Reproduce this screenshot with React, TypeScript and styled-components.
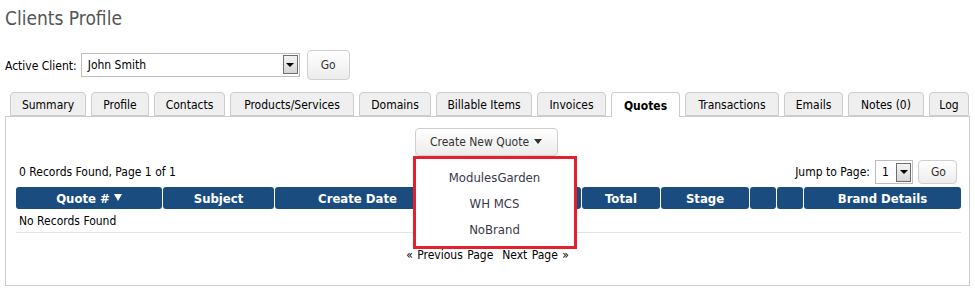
import React from 'react';
import styled, { createGlobalStyle } from 'styled-components';

const GlobalStyle = createGlobalStyle`
  body {
    margin: 0;
    background: #fff;
    font-family: "DejaVu Sans Condensed", "DejaVu Sans", sans-serif;
    font-size: 12px;
    color: #000;
  }
`;

const Page = styled.div`
  width: 975px;
  height: 290px;
  padding: 0 5px;
  box-sizing: border-box;
  overflow: hidden;
`;

const Title = styled.h1`
  margin: 0;
  padding-top: 7px;
  height: 43px;
  box-sizing: border-box;
  font-size: 19px;
  font-weight: normal;
  color: #555;
`;

const ClientRow = styled.div`
  display: flex;
  align-items: center;
  gap: 4px;
  height: 37px;
  margin-top: 3px;
`;

const Label = styled.span`
  color: #000;
  padding-top: 3px;
`;

const SelectBox = styled.div<{ $w: number }>`
  width: ${(p) => p.$w}px;
  height: 24px;
  box-sizing: border-box;
  border: 1px solid #bdbdbd;
  background: #fff;
  display: flex;
  align-items: center;
  justify-content: space-between;
  padding-left: 6px;
  padding-right: 1px;
  font-size: 12px;
`;

const SelectArrow = styled.span`
  width: 15px;
  height: 19px;
  box-sizing: border-box;
  border: 1px solid #6d6d6d;
  background: linear-gradient(#f4f4f4, #d6d6d6);
  display: flex;
  align-items: center;
  justify-content: center;
  &::after {
    content: '';
    border-left: 4px solid transparent;
    border-right: 4px solid transparent;
    border-top: 4px solid #000;
  }
`;

const Button = styled.button<{ $w?: number; $h?: number }>`
  width: ${(p) => (p.$w ? `${p.$w}px` : 'auto')};
  height: ${(p) => p.$h || 29}px;
  margin-left: 3px;
  border: 1px solid #cfcfcf;
  border-radius: 4px;
  background: linear-gradient(#ffffff, #ececec);
  font-family: inherit;
  font-size: 12px;
  color: #333;
  padding: 0 12px;
  cursor: pointer;
`;

const Tabs = styled.ul`
  list-style: none;
  margin: 9px 0 0;
  padding: 0 0 0 5px;
  display: flex;
  gap: 5px;
  height: 24px;
  position: relative;
  z-index: 1;
`;

const Tab = styled.li<{ $active?: boolean; $w: number }>`
  width: ${(p) => p.$w}px;
  flex-shrink: 0;
  height: ${(p) => (p.$active ? 25 : 24)}px;
  box-sizing: border-box;
  border: 1px solid #ccc;
  border-bottom: ${(p) => (p.$active ? 'none' : '1px solid #ccc')};
  border-radius: 4px 4px 0 0;
  background: ${(p) => (p.$active ? '#fff' : '#efefef')};
  font-weight: ${(p) => (p.$active ? 'bold' : 'normal')};
  color: #000;
  display: flex;
  align-items: center;
  justify-content: center;
  padding-top: 1px;
  white-space: nowrap;
`;

const Panel = styled.div`
  border: 1px solid #ccc;
  height: 170px;
  box-sizing: border-box;
  padding: 11px 10px 0;
  position: relative;
`;

const Center = styled.div`
  display: flex;
  justify-content: center;
  padding-right: 3px;
`;

const DropWrap = styled.div`
  position: relative;
`;

const Caret = styled.span`
  display: inline-block;
  margin-left: 5px;
  vertical-align: 2px;
  border-left: 4px solid transparent;
  border-right: 4px solid transparent;
  border-top: 5px solid #333;
`;

const Menu = styled.ul`
  position: absolute;
  top: 28px;
  left: -2px;
  width: 164px;
  height: 93px;
  box-sizing: border-box;
  margin: 0;
  padding: 6px 0 0;
  list-style: none;
  background: #fff;
  border: 3px solid #e5202e;
  z-index: 5;
`;

const MenuItem = styled.li`
  height: 26px;
  line-height: 26px;
  text-align: center;
  font-size: 13px;
  color: #38384a;
`;

const InfoRow = styled.div`
  display: flex;
  justify-content: space-between;
  align-items: center;
  margin-top: 3px;
  height: 26px;
  padding: 0 2px 0 3px;
`;

const Jump = styled.div`
  display: flex;
  align-items: center;
  gap: 5px;
`;

const Table = styled.table`
  width: 943px;
  border-collapse: separate;
  border-spacing: 1px 0;
  margin: 2px 0 0 -1px;
  table-layout: fixed;
`;

const Th = styled.th`
  background: #1a4c7f;
  color: #fff;
  font-weight: bold;
  font-size: 13px;
  height: 22px;
  padding: 0;
  border-radius: 3px;
  text-align: center;
`;

const SortArrow = styled.span`
  display: inline-block;
  margin-left: 4px;
  vertical-align: 2px;
  border-left: 4px solid transparent;
  border-right: 4px solid transparent;
  border-top: 7px solid #fff;
`;

const Td = styled.td`
  height: 22px;
  padding: 1px 3px 0;
  border-bottom: 1px solid #e3e3e3;
`;

const Pager = styled.div`
  text-align: center;
  margin-top: 15px;
  word-spacing: 1px;
  color: #000;
`;

const tabs: [string, number][] = [
  ['Summary', 76],
  ['Profile', 58],
  ['Contacts', 71],
  ['Products/Services', 124],
  ['Domains', 72],
  ['Billable Items', 96],
  ['Invoices', 69],
  ['Quotes', 69],
  ['Transactions', 94],
  ['Emails', 59],
  ['Notes (0)', 76],
  ['Log', 40],
];

// the fourth column sits under the open brand menu
const columns: [string, number][] = [
  ['Quote #', 146],
  ['Subject', 111],
  ['Create Date', 165],
  ['', 140],
  ['Total', 78],
  ['Stage', 88],
  ['', 26],
  ['', 26],
  ['Brand Details', 157],
];

export default function App() {
  return (
    <Page>
      <GlobalStyle />
      <Title>Clients Profile</Title>
      <ClientRow>
        <Label>Active Client:</Label>
        <SelectBox $w={219}>
          John Smith
          <SelectArrow />
        </SelectBox>
        <Button $w={43} $h={30}>Go</Button>
      </ClientRow>
      <Tabs>
        {tabs.map(([t, w]) => (
          <Tab key={t} $w={w} $active={t === 'Quotes'}>
            {t}
          </Tab>
        ))}
      </Tabs>
      <Panel>
        <Center>
          <DropWrap>
            <Button $w={143} $h={28} style={{ margin: 0 }}>
              Create New Quote<Caret />
            </Button>
            <Menu>
              <MenuItem>ModulesGarden</MenuItem>
              <MenuItem>WH MCS</MenuItem>
              <MenuItem>NoBrand</MenuItem>
            </Menu>
          </DropWrap>
        </Center>
        <InfoRow>
          <span>0 Records Found, Page 1 of 1</span>
          <Jump>
            <span>Jump to Page:</span>
            <SelectBox $w={38}>
              1
              <SelectArrow />
            </SelectBox>
            <Button $w={39} $h={24} style={{ marginLeft: 0 }}>Go</Button>
          </Jump>
        </InfoRow>
        <Table>
          <colgroup>
            {columns.map(([, w], i) => (
              <col key={i} style={{ width: w }} />
            ))}
          </colgroup>
          <thead>
            <tr>
              {columns.map(([label], i) => (
                <Th key={i}>
                  {label}
                  {i === 0 && <SortArrow />}
                </Th>
              ))}
            </tr>
          </thead>
          <tbody>
            <tr>
              <Td colSpan={9}>No Records Found</Td>
            </tr>
          </tbody>
        </Table>
        <Pager>« Previous Page&nbsp; Next Page »</Pager>
      </Panel>
    </Page>
  );
}
